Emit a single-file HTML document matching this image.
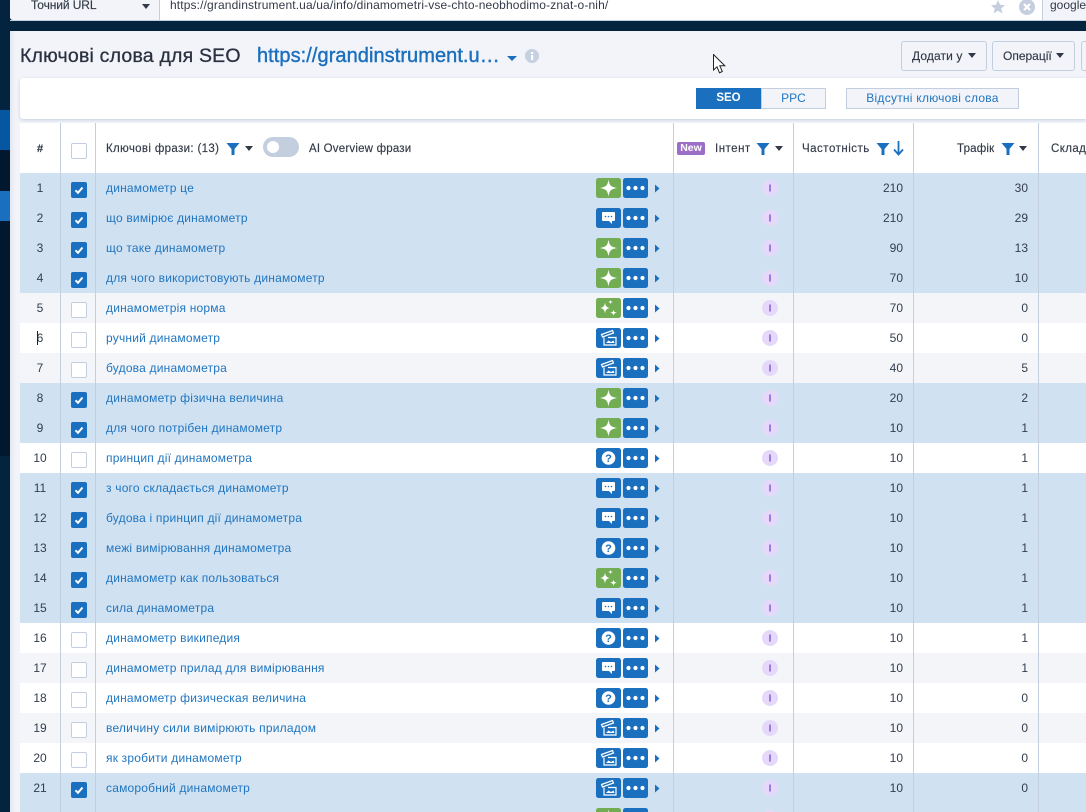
<!DOCTYPE html>
<html><head><meta charset="utf-8"><style>
html,body{margin:0;padding:0}
body{width:1086px;height:812px;overflow:hidden;position:relative;background:#03233f;font:12px "Liberation Sans",sans-serif;color:#333a47}
div,a,span,svg,i,b{position:absolute;display:block}
.side{left:0;width:10px}
#main{left:10px;top:31px;width:1076px;height:781px;background:#f2f4f9;box-shadow:inset 4px 0 4px -2px #dfe3ee}
#t{left:20px;top:123px;width:1066px;height:689px;background:#fff;overflow:hidden}
.h{top:19px;font-size:12px;white-space:nowrap;color:#333a47;line-height:14px;-webkit-text-stroke:.15px #333a47}
.v{top:0;width:1px;height:689px;background:#c3cfdf;z-index:5}
.r{left:0;width:1066px;height:30px;background:#fff}
.s{background:#d0e1f1}.g{background:#f3f5f9}
.r i{font-style:normal;left:0;width:40px;text-align:center;top:8px;line-height:14px;color:#333d4d}
.r b{left:51px;top:9px;width:14px;height:14px;background:#fff;border:1px solid #c3cfdf;border-radius:2px}
.s b{background:#1a70bf;border-color:#1a70bf}
.r a{left:86px;top:8px;line-height:14px;color:#1f75c0;white-space:nowrap;letter-spacing:.2px;transform-origin:0 0}
.r svg.ic{left:576px;top:5px;width:25px;height:20px}
.r svg.m{left:603px;top:5px;width:25px;height:20px}
.r svg.ar{left:634px;top:11px;width:6px;height:9px}
.r svg.in{left:742px;top:7px;width:16px;height:16px}
.r span{right:auto;text-align:right;top:8px;line-height:14px;color:#333d4d}
.r .f{left:783px;width:100px}.r .u{left:908px;width:100px}
.btn{top:41px;height:28px;background:#f2f4f9;border:1px solid #c3cfdf;border-radius:3px;font-size:12px;line-height:28px;color:#333a47;text-align:left;box-sizing:content-box;white-space:nowrap}
</style></head><body>
<svg width="0" height="0" style="position:absolute"><defs>
<symbol id="st" viewBox="0 0 25 20"><rect width="25" height="20" rx="2.5" fill="#72ad54"/><path d="M12.5 1.5C13.4 7.5 15 9.2 21.5 10 15 10.8 13.4 12.5 12.5 18.5 11.6 12.5 10 10.8 3.5 10 10 9.2 11.6 7.5 12.5 1.5Z" fill="#fff"/></symbol>
<symbol id="sp" viewBox="0 0 25 20"><rect width="25" height="20" rx="2.5" fill="#72ad54"/><path d="M9 4.5C9.5 8 10.3 9.3 14 10 10.300 10.700 9.500 12 9 15.500 8.500 12 7.700 10.700 4 10 7.700 9.300 8.500 8 9 4.500ZM14.500 1.500C14.700 3.200 15.200 3.700 17 4 15.200 4.300 14.700 4.800 14.500 6.500 14.300 4.800 13.800 4.300 12 4 13.800 3.700 14.300 3.200 14.500 1.500ZM17.500 11.500C17.800 13.600 18.400 14.200 20.800 14.700 18.400 15.200 17.800 15.800 17.500 18 17.200 15.800 16.600 15.200 14.200 14.700 16.600 14.200 17.200 13.600 17.500 11.500Z" fill="#fff"/></symbol>
<symbol id="ch" viewBox="0 0 25 20"><rect width="25" height="20" rx="2.500" fill="#1a70bf"/><path d="M7 4H18Q19 4 19 5V12Q19 13 18 13H16V16L13 13H7Q6 13 6 12V5Q6 4 7 4Z" fill="#fff"/><circle cx="9.500" cy="8.500" r=".8" fill="#1a70bf"/><circle cx="12.500" cy="8.500" r=".8" fill="#1a70bf"/><circle cx="15.500" cy="8.500" r=".8" fill="#1a70bf"/></symbol>
<symbol id="cl" viewBox="0 0 25 20"><rect width="25" height="20" rx="2.500" fill="#1a70bf"/><path d="M5.500 6.500 16.500 2.500 17.500 5 6.500 9ZM8 9.500V17H20V9.500H12" fill="none" stroke="#fff" stroke-width="1.200"/><path d="M10 15 12.500 12.500 15 14 17.500 12.500 18.500 15Z" fill="#fff"/></symbol>
<symbol id="qu" viewBox="0 0 25 20"><rect width="25" height="20" rx="2.500" fill="#1a70bf"/><circle cx="12.500" cy="10" r="6.800" fill="#fff"/><text x="12.500" y="13.800" text-anchor="middle" font-family="Liberation Sans" font-weight="700" font-size="11" fill="#1a70bf">?</text></symbol>
<symbol id="mo" viewBox="0 0 25 20"><rect width="25" height="20" rx="2.500" fill="#1a70bf"/><circle cx="5.500" cy="10" r="2.100" fill="#fff"/><circle cx="12.500" cy="10" r="2.100" fill="#fff"/><circle cx="19.500" cy="10" r="2.100" fill="#fff"/></symbol>
<symbol id="arr" viewBox="0 0 6 9"><path d="M1 .5 5.500 4.500 1 8.500Z" fill="#1a70bf"/></symbol>
<symbol id="int" viewBox="0 0 16 16"><circle cx="8" cy="8" r="8" fill="#e6d8fb"/><rect x="7" y="4.500" width="2" height="7" fill="#9a7ddb"/></symbol>
<symbol id="fun" viewBox="0 0 14 14"><path d="M.5 1H13.500L8.500 7V13H5.500V7Z" fill="#1a70bf"/></symbol>
<symbol id="tk" viewBox="0 0 14 14"><path d="M3.500 7.300 6 9.800 10.500 4.500" fill="none" stroke="#fff" stroke-width="2"/></symbol>
</defs></svg>

<div class="side" style="top:0;height:110px;background:#03233f"></div>
<div class="side" style="top:110px;height:40px;background:#0557a1"></div>
<div class="side" style="top:150px;height:41px;background:#02182f"></div>
<div class="side" style="top:191px;height:30px;background:#1b6fc0"></div>
<div class="side" style="top:221px;height:235px;background:#02182f"></div>
<div class="side" style="top:456px;height:356px;background:#03233f"></div>

<div style="left:10px;top:0;width:1076px;height:20px;background:#fff;border-radius:0 0 0 3px"></div>
<div style="left:10px;top:0;width:149px;height:20px;background:#f2f4f9;border-right:1px solid #c3cfdf;border-radius:0 0 0 3px"></div>
<div style="left:31px;top:-2px;line-height:14px;color:#333a47;font-size:12px;letter-spacing:-.1px;-webkit-text-stroke:.15px #333a47">Точний URL</div>
<svg style="left:142px;top:4px;width:8px;height:5px" viewBox="0 0 8 5"><path d="M0 0H8L4 5Z" fill="#333a47"/></svg>
<div style="left:170px;top:-2px;line-height:14px;color:#333a47;font-size:12px;white-space:nowrap;letter-spacing:.13px">https://grandinstrument.ua/ua/info/dinamometri-vse-chto-neobhodimo-znat-o-nih/</div>
<svg style="left:991px;top:0;width:14px;height:14px" viewBox="0 0 14 14"><path d="M7 0 9 4.800 14 5.200 10.200 8.500 11.400 13.500 7 10.800 2.600 13.500 3.800 8.500 0 5.200 5 4.800Z" fill="#c5cede"/></svg>
<svg style="left:1019px;top:-1px;width:16px;height:16px" viewBox="0 0 16 16"><circle cx="8" cy="8" r="8" fill="#c5cede"/><path d="M5 5 11 11M11 5 5 11" stroke="#fff" stroke-width="2.200"/></svg>
<div style="left:1042px;top:0;width:44px;height:20px;background:#f2f4f9;border-left:1px solid #c3cfdf"></div>
<div style="left:1050px;top:-2px;line-height:14px;font-size:12px;color:#333a47">google</div>
<div style="left:10px;top:20px;width:1076px;height:1px;background:#c3cfdf"></div>

<div id="main"></div>
<div style="left:20px;top:46px;font-size:19.500px;line-height:21px;color:#2b3140;white-space:nowrap;letter-spacing:.2px;-webkit-text-stroke:.3px #2b3140">Ключові слова для SEO</div>
<div style="left:257px;top:45px;font-size:20px;line-height:23px;color:#1b6fbd;white-space:nowrap;-webkit-text-stroke:.4px #1b6fbd;letter-spacing:.06px">https://grandinstrument.u…</div>
<svg style="left:507px;top:56px;width:10px;height:6px" viewBox="0 0 10 6"><path d="M0 0H10L5 5Z" fill="#1b6fbd"/></svg>
<svg style="left:525px;top:49px;width:14px;height:14px" viewBox="0 0 14 14"><circle cx="7" cy="7" r="7" fill="#c5d0e0"/><rect x="6" y="6" width="2.200" height="5" fill="#fff"/><rect x="6" y="3" width="2.200" height="2" fill="#fff"/></svg>

<div class="btn" style="left:901px;width:74px;padding-left:10px;letter-spacing:.1px;-webkit-text-stroke:.15px #333a47">Додати у</div>
<svg style="left:968px;top:53px;width:8px;height:5px" viewBox="0 0 8 5"><path d="M0 0H8L4 5Z" fill="#333a47"/></svg>
<div class="btn" style="left:992px;width:71px;padding-left:10px;-webkit-text-stroke:.15px #333a47">Операції</div>
<svg style="left:1056px;top:53px;width:8px;height:5px" viewBox="0 0 8 5"><path d="M0 0H8L4 5Z" fill="#333a47"/></svg>
<div class="btn" style="left:1081px;width:20px"></div>

<div style="left:20px;top:78px;width:1066px;height:41px;background:#fff;border-radius:3px 0 0 3px;box-shadow:0 1px 3px #c3cfdf"></div>
<div style="left:696px;top:88px;width:65px;height:21px;background:#1a70bf;color:#fff;text-align:center;line-height:21px;font-weight:700;font-size:11.500px">SEO</div>
<div style="left:761px;top:88px;width:63px;height:19px;background:#f2f4f9;border:1px solid #c3cfdf;color:#1f75c0;text-align:center;line-height:19px">PPC</div>
<div style="left:846px;top:88px;width:171px;height:19px;background:#f2f4f9;border:1px solid #c3cfdf;color:#1f75c0;text-align:center;line-height:19px;white-space:nowrap;letter-spacing:.25px">Відсутні ключові слова</div>

<div id="t">
<div class="h" style="left:0;width:40px;text-align:center;font-weight:700;font-size:11px">#</div>
<div style="left:51px;top:20px;width:14px;height:14px;background:#fff;border:1px solid #c3cfdf;border-radius:2px"></div>
<div class="h" style="left:86px;font-size:11.500px;letter-spacing:.35px">Ключові фрази: (13)</div>
<svg style="left:206px;top:19px;width:14px;height:14px"><use href="#fun"/></svg>
<svg style="left:225px;top:23px;width:8px;height:5px" viewBox="0 0 8 5"><path d="M0 0H8L4 5Z" fill="#333a47"/></svg>
<div style="left:243px;top:14px;width:36px;height:20px;border-radius:10px;background:#c3cfdf"></div>
<div style="left:247px;top:18px;width:12px;height:12px;border-radius:6px;background:#fff"></div>
<div class="h" style="left:289px;font-size:11.500px;letter-spacing:.2px">AI Overview фрази</div>
<div style="left:657px;top:19px;width:28px;height:13px;border-radius:2px;background:#9b6fc6;color:#fff;font-weight:700;font-size:10.500px;line-height:13px;text-align:center">New</div>
<div class="h" style="left:695px;font-size:11.500px;letter-spacing:.5px">Інтент</div>
<svg style="left:736px;top:19px;width:14px;height:14px"><use href="#fun"/></svg>
<svg style="left:755px;top:23px;width:8px;height:5px" viewBox="0 0 8 5"><path d="M0 0H8L4 5Z" fill="#333a47"/></svg>
<div class="h" style="left:782px;font-size:11.500px;letter-spacing:.5px">Частотність</div>
<svg style="left:856px;top:19px;width:14px;height:14px"><use href="#fun"/></svg>
<svg style="left:873px;top:18px;width:11px;height:15px" viewBox="0 0 11 15"><path d="M5.500 0V13M1 8.500 5.500 13.500 10 8.500" fill="none" stroke="#1a70bf" stroke-width="1.800"/></svg>
<div class="h" style="left:937px;font-size:11.500px;letter-spacing:.2px">Трафік</div>
<svg style="left:981px;top:19px;width:14px;height:14px"><use href="#fun"/></svg>
<svg style="left:999px;top:23px;width:8px;height:5px" viewBox="0 0 8 5"><path d="M0 0H8L4 5Z" fill="#333a47"/></svg>
<div class="h" style="left:1031px;font-size:11.500px;letter-spacing:.4px">Складність</div>

<div class="r s" style="top:50px"><i>1</i><b><svg width="14" height="14"><use href="#tk"/></svg></b><a>динамометр це</a><svg class="ic"><use href="#st"/></svg><svg class="m"><use href="#mo"/></svg><svg class="ar"><use href="#arr"/></svg><svg class="in"><use href="#int"/></svg><span class="f">210</span><span class="u">30</span></div>
<div class="r s" style="top:80px"><i>2</i><b><svg width="14" height="14"><use href="#tk"/></svg></b><a>що вимірює динамометр</a><svg class="ic"><use href="#ch"/></svg><svg class="m"><use href="#mo"/></svg><svg class="ar"><use href="#arr"/></svg><svg class="in"><use href="#int"/></svg><span class="f">210</span><span class="u">29</span></div>
<div class="r s" style="top:110px"><i>3</i><b><svg width="14" height="14"><use href="#tk"/></svg></b><a>що таке динамометр</a><svg class="ic"><use href="#st"/></svg><svg class="m"><use href="#mo"/></svg><svg class="ar"><use href="#arr"/></svg><svg class="in"><use href="#int"/></svg><span class="f">90</span><span class="u">13</span></div>
<div class="r s" style="top:140px"><i>4</i><b><svg width="14" height="14"><use href="#tk"/></svg></b><a>для чого використовують динамометр</a><svg class="ic"><use href="#st"/></svg><svg class="m"><use href="#mo"/></svg><svg class="ar"><use href="#arr"/></svg><svg class="in"><use href="#int"/></svg><span class="f">70</span><span class="u">10</span></div>
<div class="r g" style="top:170px"><i>5</i><b></b><a>динамометрія норма</a><svg class="ic"><use href="#sp"/></svg><svg class="m"><use href="#mo"/></svg><svg class="ar"><use href="#arr"/></svg><svg class="in"><use href="#int"/></svg><span class="f">70</span><span class="u">0</span></div>
<div class="r" style="top:200px"><i>6</i><b></b><a>ручний динамометр</a><svg class="ic"><use href="#cl"/></svg><svg class="m"><use href="#mo"/></svg><svg class="ar"><use href="#arr"/></svg><svg class="in"><use href="#int"/></svg><span class="f">50</span><span class="u">0</span></div>
<div class="r g" style="top:230px"><i>7</i><b></b><a>будова динамометра</a><svg class="ic"><use href="#cl"/></svg><svg class="m"><use href="#mo"/></svg><svg class="ar"><use href="#arr"/></svg><svg class="in"><use href="#int"/></svg><span class="f">40</span><span class="u">5</span></div>
<div class="r s" style="top:260px"><i>8</i><b><svg width="14" height="14"><use href="#tk"/></svg></b><a>динамометр фізична величина</a><svg class="ic"><use href="#st"/></svg><svg class="m"><use href="#mo"/></svg><svg class="ar"><use href="#arr"/></svg><svg class="in"><use href="#int"/></svg><span class="f">20</span><span class="u">2</span></div>
<div class="r s" style="top:290px"><i>9</i><b><svg width="14" height="14"><use href="#tk"/></svg></b><a>для чого потрібен динамометр</a><svg class="ic"><use href="#st"/></svg><svg class="m"><use href="#mo"/></svg><svg class="ar"><use href="#arr"/></svg><svg class="in"><use href="#int"/></svg><span class="f">10</span><span class="u">1</span></div>
<div class="r" style="top:320px"><i>10</i><b></b><a>принцип дії динамометра</a><svg class="ic"><use href="#qu"/></svg><svg class="m"><use href="#mo"/></svg><svg class="ar"><use href="#arr"/></svg><svg class="in"><use href="#int"/></svg><span class="f">10</span><span class="u">1</span></div>
<div class="r s" style="top:350px"><i>11</i><b><svg width="14" height="14"><use href="#tk"/></svg></b><a>з чого складається динамометр</a><svg class="ic"><use href="#ch"/></svg><svg class="m"><use href="#mo"/></svg><svg class="ar"><use href="#arr"/></svg><svg class="in"><use href="#int"/></svg><span class="f">10</span><span class="u">1</span></div>
<div class="r s" style="top:380px"><i>12</i><b><svg width="14" height="14"><use href="#tk"/></svg></b><a>будова і принцип дії динамометра</a><svg class="ic"><use href="#ch"/></svg><svg class="m"><use href="#mo"/></svg><svg class="ar"><use href="#arr"/></svg><svg class="in"><use href="#int"/></svg><span class="f">10</span><span class="u">1</span></div>
<div class="r s" style="top:410px"><i>13</i><b><svg width="14" height="14"><use href="#tk"/></svg></b><a>межі вимірювання динамометра</a><svg class="ic"><use href="#qu"/></svg><svg class="m"><use href="#mo"/></svg><svg class="ar"><use href="#arr"/></svg><svg class="in"><use href="#int"/></svg><span class="f">10</span><span class="u">1</span></div>
<div class="r s" style="top:440px"><i>14</i><b><svg width="14" height="14"><use href="#tk"/></svg></b><a>динамометр как пользоваться</a><svg class="ic"><use href="#sp"/></svg><svg class="m"><use href="#mo"/></svg><svg class="ar"><use href="#arr"/></svg><svg class="in"><use href="#int"/></svg><span class="f">10</span><span class="u">1</span></div>
<div class="r s" style="top:470px"><i>15</i><b><svg width="14" height="14"><use href="#tk"/></svg></b><a>сила динамометра</a><svg class="ic"><use href="#ch"/></svg><svg class="m"><use href="#mo"/></svg><svg class="ar"><use href="#arr"/></svg><svg class="in"><use href="#int"/></svg><span class="f">10</span><span class="u">1</span></div>
<div class="r" style="top:500px"><i>16</i><b></b><a>динамометр википедия</a><svg class="ic"><use href="#qu"/></svg><svg class="m"><use href="#mo"/></svg><svg class="ar"><use href="#arr"/></svg><svg class="in"><use href="#int"/></svg><span class="f">10</span><span class="u">1</span></div>
<div class="r g" style="top:530px"><i>17</i><b></b><a>динамометр прилад для вимірювання</a><svg class="ic"><use href="#ch"/></svg><svg class="m"><use href="#mo"/></svg><svg class="ar"><use href="#arr"/></svg><svg class="in"><use href="#int"/></svg><span class="f">10</span><span class="u">1</span></div>
<div class="r" style="top:560px"><i>18</i><b></b><a>динамометр физическая величина</a><svg class="ic"><use href="#qu"/></svg><svg class="m"><use href="#mo"/></svg><svg class="ar"><use href="#arr"/></svg><svg class="in"><use href="#int"/></svg><span class="f">10</span><span class="u">0</span></div>
<div class="r g" style="top:590px"><i>19</i><b></b><a>величину сили вимірюють приладом</a><svg class="ic"><use href="#cl"/></svg><svg class="m"><use href="#mo"/></svg><svg class="ar"><use href="#arr"/></svg><svg class="in"><use href="#int"/></svg><span class="f">10</span><span class="u">0</span></div>
<div class="r" style="top:620px"><i>20</i><b></b><a>як зробити динамометр</a><svg class="ic"><use href="#cl"/></svg><svg class="m"><use href="#mo"/></svg><svg class="ar"><use href="#arr"/></svg><svg class="in"><use href="#int"/></svg><span class="f">10</span><span class="u">0</span></div>
<div class="r s" style="top:650px"><i>21</i><b><svg width="14" height="14"><use href="#tk"/></svg></b><a>саморобний динамометр</a><svg class="ic"><use href="#cl"/></svg><svg class="m"><use href="#mo"/></svg><svg class="ar"><use href="#arr"/></svg><svg class="in"><use href="#int"/></svg><span class="f">10</span><span class="u">0</span></div>
<div class="r s" style="top:680px"><svg class="ic"><use href="#st"/></svg><svg class="m"><use href="#mo"/></svg><svg class="in"><use href="#int"/></svg></div>

<div class="v" style="left:40px"></div>
<div class="v" style="left:75px"></div>
<div class="v" style="left:653px"></div>
<div class="v" style="left:773px"></div>
<div class="v" style="left:893px"></div>
<div class="v" style="left:1018px"></div>
<div style="left:17px;top:208px;width:1px;height:14px;background:#222;z-index:6"></div>
</div>

<svg style="left:713px;top:54px;width:13px;height:20px;z-index:9" viewBox="0 0 13 20"><path d="M.5.500V16L4 12.800 6.500 18.800 9.300 17.500 6.800 11.800H11.800Z" fill="#fff" stroke="#222" stroke-width="1"/></svg>
</body></html>
